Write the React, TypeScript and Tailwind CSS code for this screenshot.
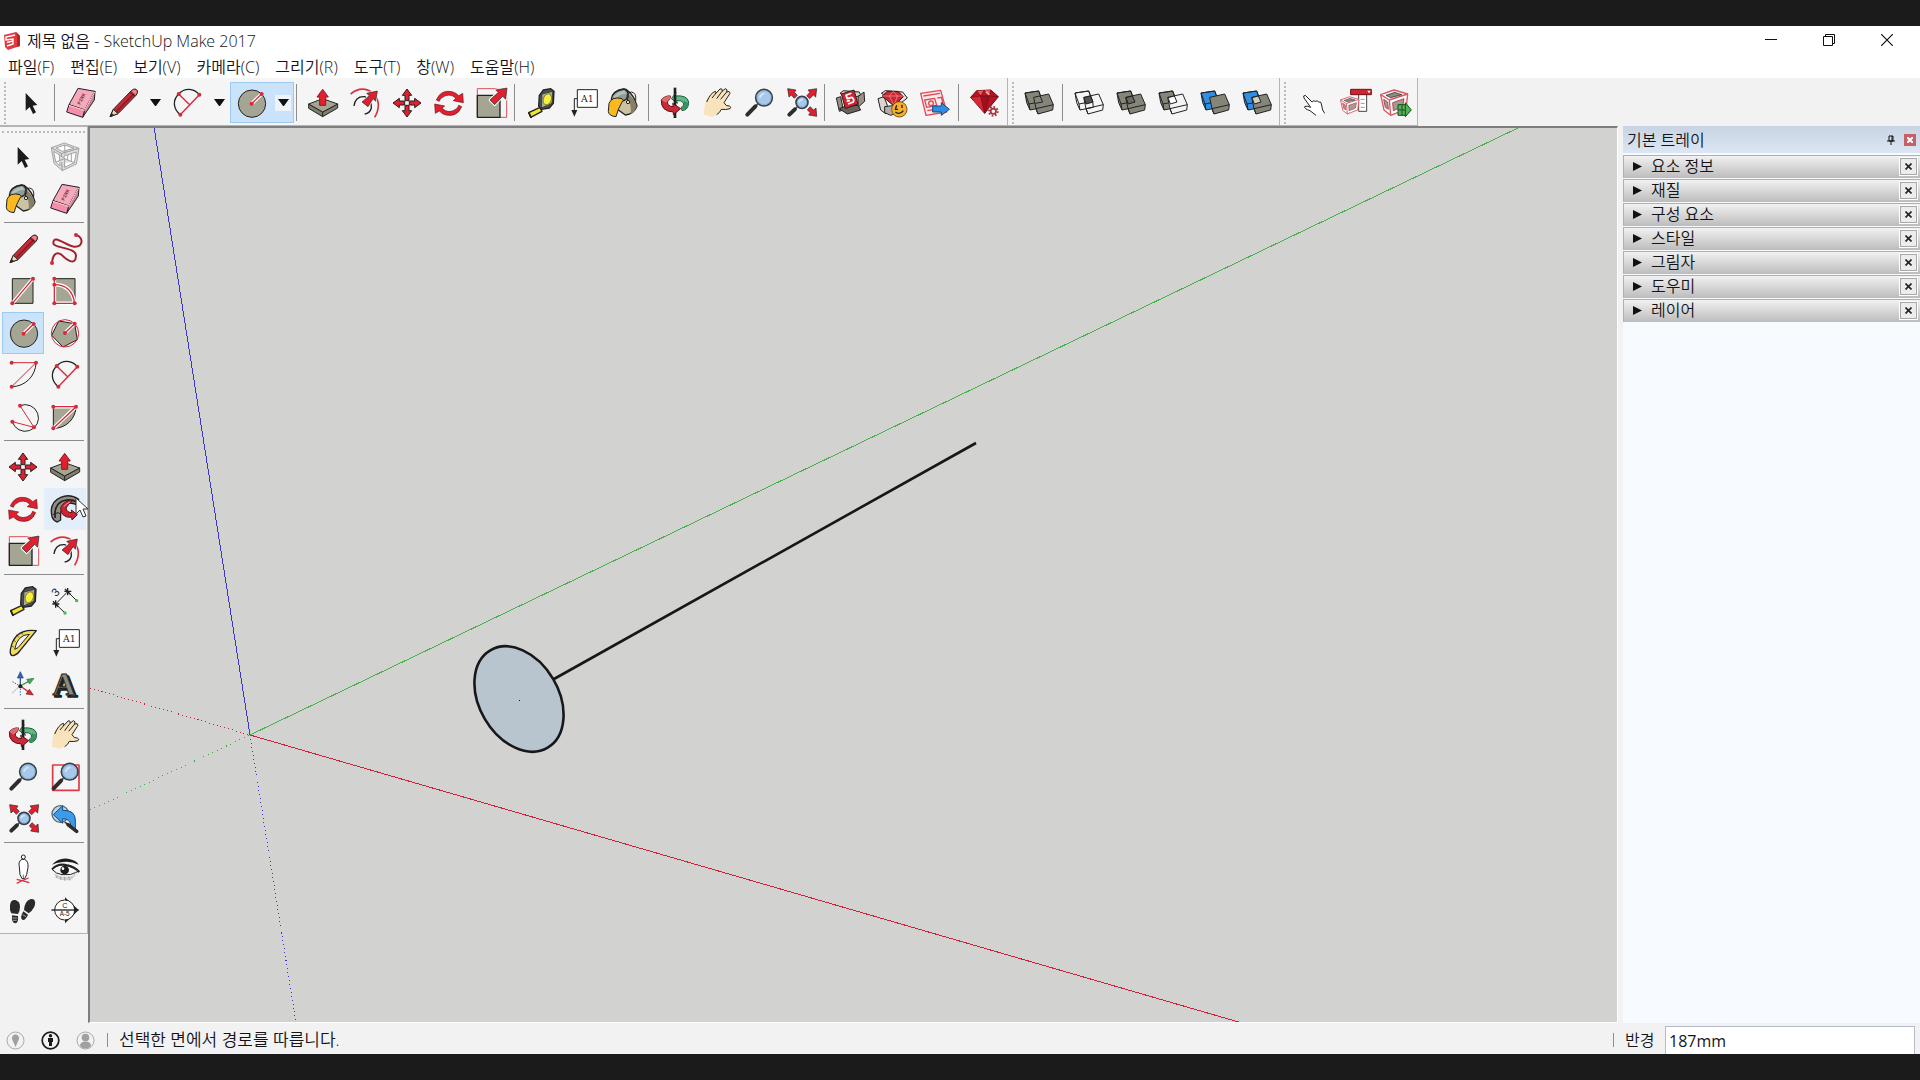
import type { ReactNode } from 'react'

const RED = '#e01f2f'
const INK = '#222222'
const STONE = '#a5a594'

function Icon({ children, low }: { children: ReactNode; low?: boolean }) {
  return (
    <svg
      className="h-[42px] w-[42px] shrink-0"
      viewBox={low ? '0 -6 126 126' : '0 0 126 126'}
      fill="none"
      strokeLinejoin="round"
      aria-hidden="true"
    >
      {children}
    </svg>
  )
}

function Dots({ points }: { points: number[][] }) {
  return (
    <>
      {points.map(([x, y]) => (
        <circle key={`${x}-${y}`} cx={x} cy={y} r="6" fill="#d42a3a" />
      ))}
    </>
  )
}

// red guide line with a white edge, used on filled shapes
function Guide({ d }: { d: string }) {
  return (
    <>
      <path d={d} stroke="#fff" strokeWidth="11" />
      <path d={d} stroke="#d42a3a" strokeWidth="4" />
    </>
  )
}

function Lens({ cx, cy, r, hx, hy }: { cx: number; cy: number; r: number; hx: number; hy: number }) {
  const dx = hx - cx
  const dy = hy - cy
  const len = Math.hypot(dx, dy)
  const sx = cx + (dx / len) * (r + 2)
  const sy = cy + (dy / len) * (r + 2)
  const mx = cx + (dx / len) * (r + 12)
  const my = cy + (dy / len) * (r + 12)
  return (
    <>
      <path d={`M${sx} ${sy}L${mx} ${my}`} stroke="#444" strokeWidth="5" />
      <path d={`M${mx} ${my}L${hx} ${hy}`} stroke="#2d2d2d" strokeWidth="12" strokeLinecap="round" />
      <circle cx={cx} cy={cy} r={r} fill="#a6c8ea" stroke="#3a4048" strokeWidth="5" />
      <circle cx={cx} cy={cy} r={r - 4} stroke="#7fa3c8" strokeWidth="2" />
      <path d={`M${cx - r / 2} ${cy}Q${cx - r / 3} ${cy - r / 2} ${cx + 2} ${cy - r / 2}`} stroke="#d6e8f8" strokeWidth="5" />
    </>
  )
}

function SelectIcon() {
  return (
    <Icon>
      <path d="M47 33V86L59 75L69 96L78 91L68 71L82 69Z" fill="#1b1b1b" />
    </Icon>
  )
}

function ComponentIcon() {
  return (
    <Icon>
      <g stroke="#a3a3a3" strokeWidth="3" fill="#dedede">
        <path d="M22 35L61 21L105 37L52 53Z" />
        <path d="M22 35L52 53L55 104L30 82Z" />
        <path d="M52 53L105 37L97 84L55 104Z" />
        <path d="M36 36L62 27L90 37L55 46Z" fill="#fff" />
        <path d="M29 46L46 57L48 90L35 78Z" fill="#fff" />
        <path d="M60 60L97 48L91 80L62 94Z" fill="#fff" />
        <path d="M62 27L63 55M35 78L62 68L91 80M46 57L62 68V94M72 56L70 72M82 52V76" />
      </g>
    </Icon>
  )
}

function PaintIcon() {
  return (
    <Icon>
      <path d="M28 40Q40 18 66 22Q90 38 99 72Q90 96 64 99L38 80Z" fill="#cbc3a2" stroke={INK} strokeWidth="4" />
      <path d="M76 38Q92 52 98 72Q92 92 80 96Q84 66 68 48Z" fill="#877f68" />
      <path d="M22 52Q24 26 60 21Q76 26 72 46Q56 66 22 52Z" fill="#8d9d98" stroke={INK} strokeWidth="4" />
      <path d="M28 44Q40 28 62 26L66 36Q48 34 34 50Z" fill="#b5c1bc" />
      <path d="M15 64Q24 42 54 50Q62 54 54 60Q42 80 36 104Q14 102 13 88Z" fill="#fbb91f" stroke={INK} strokeWidth="3" />
      <circle cx="72" cy="60" r="5" fill="#eee" stroke={INK} strokeWidth="3" />
      <path d="M72 58Q62 34 82 30Q98 32 95 56" stroke={INK} strokeWidth="3" />
    </Icon>
  )
}

function EraserIcon() {
  return (
    <Icon>
      <g stroke={INK} strokeWidth="3">
        <path d="M54 19L105 28L74 84L27 68Z" fill="#f7a8bb" />
        <path d="M105 28L103 54L68 106L74 84Z" fill="#d97f97" />
        <path d="M27 68L74 84L68 106L20 90Z" fill="#f98bab" />
      </g>
      <path d="M27 70L74 85L104 30" stroke="#fdd" strokeWidth="3" />
      <text x="60" y="69" transform="rotate(-62 60 69)" fontFamily="Liberation Mono, monospace" fontWeight="700" fontSize="15" fill="#8a3a4c">PINK</text>
    </Icon>
  )
}

function PencilIcon() {
  return (
    <Icon>
      <path d="M24 104L34 82L88 26Q100 16 106 26Q108 34 102 40L48 95Z" fill="#cf2733" stroke={INK} strokeWidth="3" />
      <path d="M34 82L48 95L24 104Z" fill="#ead7ac" stroke={INK} strokeWidth="3" />
      <path d="M24 104L29 92L35 99Z" fill={INK} />
      <path d="M44 88L94 37" stroke="#8e1a24" strokeWidth="5" />
      <path d="M84 29L99 43" stroke={INK} strokeWidth="3" />
      <path d="M88 28Q98 19 104 27Q106 32 101 38Z" fill="#d98f98" />
    </Icon>
  )
}

function FreehandIcon() {
  return (
    <Icon>
      <path d="M96 21C120 28 118 58 90 56C66 54 28 16 28 46C30 62 96 56 96 84C94 116 66 94 52 80C36 68 26 82 24 105" stroke="#a3212d" strokeWidth="6" />
      <Dots points={[[96, 21], [24, 105]]} />
    </Icon>
  )
}

function RectangleIcon() {
  return (
    <Icon>
      <rect x="31" y="26" width="62" height="74" fill={STONE} stroke={INK} strokeWidth="3" />
      <Guide d="M31 100L93 26" />
      <Dots points={[[31, 100], [93, 26]]} />
    </Icon>
  )
}

function RotatedRectIcon() {
  return (
    <Icon>
      <rect x="31" y="26" width="62" height="74" fill={STONE} stroke={INK} strokeWidth="3" />
      <Guide d="M31 26V100H92" />
      <Guide d="M31 44Q84 44 92 100" />
      <Dots points={[[31, 26], [31, 44], [31, 100], [92, 100]]} />
    </Icon>
  )
}

function CircleIcon() {
  return (
    <Icon>
      <circle cx="66" cy="65" r="41" fill={STONE} stroke={INK} strokeWidth="3" />
      <Guide d="M65 65L95 36" />
      <Dots points={[[65, 65], [95, 36]]} />
    </Icon>
  )
}

function PolygonIcon() {
  return (
    <Icon>
      <path d="M92 35L100 83L57 105L23 70L44 27Z" fill={STONE} stroke={INK} strokeWidth="3" />
      <circle cx="63" cy="64" r="41" stroke="#d42a3a" strokeWidth="3" />
      <Guide d="M63 63L92 35" />
      <Dots points={[[63, 63], [92, 35]]} />
    </Icon>
  )
}

function ArcIcon() {
  return (
    <Icon>
      <path d="M29 98A73 73 0 0 0 102 26" stroke={INK} strokeWidth="3" />
      <path d="M29 26H102L29 98" stroke="#d42a3a" strokeWidth="3" />
      <Dots points={[[29, 26], [102, 26], [29, 98]]} />
    </Icon>
  )
}

function TwoPointArcIcon() {
  return (
    <Icon>
      <path d="M43 98C20 80 20 54 38 36C56 16 84 18 100 38" stroke={INK} strokeWidth="4" />
      <path d="M100 38L43 98M38 36L71 68" stroke="#d42a3a" strokeWidth="4" />
      <Dots points={[[38, 36], [100, 38], [43, 98]]} />
    </Icon>
  )
}

function ThreePointArcIcon() {
  return (
    <Icon>
      <path d="M54 29A40 40 0 1 1 31 77" stroke={INK} strokeWidth="3" />
      <path d="M54 29L96 94L31 77" stroke="#d42a3a" strokeWidth="3" />
      <Dots points={[[54, 29], [31, 77], [96, 94]]} />
    </Icon>
  )
}

function PieIcon() {
  return (
    <Icon>
      <path d="M28 32H96A66 66 0 0 1 28 97Z" fill={STONE} stroke={INK} strokeWidth="3" />
      <Guide d="M28 97L96 32H28" />
      <Dots points={[[28, 32], [96, 32], [28, 97]]} />
    </Icon>
  )
}

function MoveIcon() {
  return (
    <Icon>
      {[0, 90, 180, 270].map((angle) => (
        <path key={angle} d="M63 21L77 40H69V56H57V40H49Z" transform={`rotate(${angle} 63 63)`} fill={RED} stroke={INK} strokeWidth="3" />
      ))}
    </Icon>
  )
}

function PushPullIcon() {
  return (
    <Icon>
      <path d="M20 66V79L62 104L107 78V66L62 90Z" fill="#7f7f70" stroke={INK} strokeWidth="3" />
      <path d="M20 66L62 50L107 66L62 90Z" fill={STONE} stroke={INK} strokeWidth="3" />
      <path d="M62 90V104" stroke={INK} strokeWidth="3" />
      <path d="M62 22L79 45H71V70H53V45H45Z" fill={RED} stroke="#8e1a24" strokeWidth="3" />
    </Icon>
  )
}

function RotateIcon() {
  return (
    <Icon>
      {[0, 180].map((angle) => (
        <g key={angle} transform={`rotate(${angle} 63 64)`}>
          <path d="M25 54Q38 22 72 29Q84 32 92 41L104 34L106 62L76 56L84 49Q64 30 40 48Q36 52 34 58Z" fill={RED} stroke="#6b1018" strokeWidth="2" />
        </g>
      ))}
    </Icon>
  )
}

function FollowMeIcon() {
  return (
    <Icon>
      <path d="M24 86Q14 44 50 28Q78 16 104 34L98 50Q72 38 58 54Q48 66 50 96L40 102Q28 98 24 86Z" fill="#8f8f86" stroke={INK} strokeWidth="4" />
      <path d="M34 90Q28 54 54 40Q76 30 98 42" stroke={INK} strokeWidth="5" />
      <path d="M26 80L42 74L50 78" stroke={INK} strokeWidth="3" />
      <path d="M50 58Q62 36 88 36Q74 46 66 60Q68 74 84 74L82 66L100 80L84 96L83 88Q50 90 50 58Z" fill="#cf2430" stroke="#5b1218" strokeWidth="3" />
      <path d="M60 56Q66 46 78 42" stroke="#f0a0a6" strokeWidth="3" />
    </Icon>
  )
}

function ScaleIcon() {
  return (
    <Icon>
      <rect x="22" y="20" width="88" height="86" stroke="#d8505c" strokeWidth="3" />
      <rect x="22" y="40" width="68" height="66" fill={STONE} stroke={INK} strokeWidth="4" />
      <path d="M111 18L107 52L98 43L74 68L60 54L85 31L77 24Z" fill={RED} stroke="#fff" strokeWidth="8" />
      <path d="M111 18L107 52L98 43L74 68L60 54L85 31L77 24Z" fill={RED} stroke={INK} strokeWidth="2" />
    </Icon>
  )
}

function OffsetIcon() {
  return (
    <Icon>
      <path d="M20 36Q54 8 88 34Q116 64 92 106" stroke="#d8303e" strokeWidth="5" />
      <path d="M30 72Q34 42 62 44Q84 54 82 78Q78 94 62 96" stroke={INK} strokeWidth="4" />
      <path d="M100 27L95 58L87 50L72 74L54 60L76 41L68 34Z" fill={RED} stroke="#fff" strokeWidth="6" />
      <path d="M100 27L95 58L87 50L72 74L54 60L76 41L68 34Z" fill={RED} stroke={INK} strokeWidth="2" />
    </Icon>
  )
}

function TapeIcon() {
  return (
    <Icon>
      <path d="M60 76L26 92L32 106L66 88Z" fill="#f4e32c" stroke={INK} strokeWidth="4" />
      <path d="M26 90L34 108" stroke={INK} strokeWidth="5" />
      <path d="M58 40L70 24L92 20L102 28L100 64L88 78L64 82L56 72Z" fill="#4e524e" stroke={INK} strokeWidth="4" />
      <path d="M66 36L98 28L96 64L64 78Z" fill="#a9ada2" stroke={INK} strokeWidth="2" />
      <ellipse cx="82" cy="52" rx="12" ry="17" transform="rotate(20 82 52)" fill="#f8ee3c" stroke="#8a862a" strokeWidth="3" />
    </Icon>
  )
}

function DimensionIcon() {
  return (
    <Icon>
      <path d="M71 35L35 72M71 35L98 62M35 72L63 99" stroke={INK} strokeWidth="3" />
      <path d="M71 24V46M61 34H82M63 27L79 43M35 61V83M25 72H46M27 64L43 80" stroke={INK} strokeWidth="4" />
      <circle cx="98" cy="62" r="5" fill="#4fb45a" />
      <circle cx="63" cy="99" r="5" fill="#4fb45a" />
      <text x="36" y="52" transform="rotate(-45 36 52)" fontFamily="Liberation Sans, sans-serif" fontSize="34" fill={INK}>3</text>
    </Icon>
  )
}

function ProtractorIcon() {
  return (
    <Icon>
      <path d="M103 26Q36 18 25 84Q23 102 34 101Q46 98 54 86Z" fill="#f2dc5a" stroke={INK} strokeWidth="4" />
      <path d="M82 37Q46 38 38 82L48 77Z" fill="#f5f5f5" stroke={INK} strokeWidth="3" />
      <path d="M58 30L62 38M44 38L50 46M33 54L41 59M28 72L36 75" stroke={INK} strokeWidth="2" />
    </Icon>
  )
}

function TextIcon() {
  return (
    <Icon>
      <rect x="46" y="23" width="60" height="53" fill="#fff" stroke={INK} strokeWidth="3" />
      <path d="M46 50H37V88" stroke={INK} strokeWidth="3" />
      <path d="M28 84H46L37 104Z" fill={INK} />
      <text x="76" y="59" textAnchor="middle" fontFamily="DejaVu Serif, serif" fontWeight="400" fontSize="28" fill={INK}>A1</text>
    </Icon>
  )
}

function AxesIcon() {
  return (
    <Icon>
      <path d="M55 66V36" stroke="#2f5fa8" strokeWidth="4" />
      <path d="M55 23L64 42H46Z" fill="#2f66b4" stroke="#1f4478" strokeWidth="2" />
      <path d="M55 66L80 52" stroke="#3d9a50" strokeWidth="4" />
      <path d="M96 43L83 60L74 46Z" fill="#4aa35a" stroke="#2c7a3c" strokeWidth="2" />
      <path d="M55 66L80 84" stroke="#c02834" strokeWidth="4" />
      <path d="M94 93L72 90L82 76Z" fill="#cf2a36" stroke="#8e1a24" strokeWidth="2" />
      <path d="M55 74V98" stroke="#2f5fa8" strokeWidth="3" strokeDasharray="4 4" />
      <path d="M49 70L30 88" stroke="#3d9a50" strokeWidth="3" strokeDasharray="4 4" />
      <path d="M49 63L28 51" stroke="#c02834" strokeWidth="3" strokeDasharray="4 4" />
      <circle cx="55" cy="67" r="6" fill={INK} />
    </Icon>
  )
}

function SolidTextIcon() {
  return (
    <Icon>
      <g fontFamily="Liberation Serif, serif" fontWeight="700" fontSize="96" textAnchor="middle">
        <text x="66" y="98" fill="#4c4c44" stroke={INK} strokeWidth="5">A</text>
        <text x="60" y="94" fill="#8b8b7e" stroke={INK} strokeWidth="3">A</text>
      </g>
    </Icon>
  )
}

function OrbitIcon() {
  return (
    <Icon>
      <path d="M62 42Q100 38 104 60Q104 84 84 86L82 76Q92 70 88 62Q82 54 68 56L70 64L52 50L66 32Z" fill="#5fb886" stroke="#1f5a3a" strokeWidth="3" />
      <path d="M90 56Q98 62 104 62Q104 80 84 86L82 76Q92 70 90 56Z" fill="#39925f" />
      <path d="M63 17V108" stroke={INK} strokeWidth="8" />
      <path d="M22 54Q32 40 50 42L46 54Q36 58 42 68Q48 74 58 74L56 64L80 80L58 98L58 90Q20 88 22 54Z" fill="#c92a3a" stroke="#5b1218" strokeWidth="3" />
      <path d="M22 54Q32 40 50 42L46 54Q38 56 36 62Z" fill="#de6a70" />
    </Icon>
  )
}

function HandIcon() {
  return (
    <Icon>
      <path d="M24 98Q24 70 32 52Q46 30 58 28Q62 28 60 34L72 21Q80 18 80 26L88 20Q96 20 94 28L100 28Q104 32 98 40L84 62Q90 72 98 72Q106 74 104 80Q90 84 76 82Q68 96 50 104Z" fill="#f8e3bd" />
      <path d="M32 60Q44 32 58 28Q62 28 58 36L48 48M58 36L72 21Q80 18 78 28L62 50M78 28L88 20Q96 22 92 30L74 52M92 30Q102 26 102 34L84 62Q90 74 100 72Q108 76 102 80Q90 84 76 82Q72 92 62 98" stroke={INK} strokeWidth="3" />
    </Icon>
  )
}

function ZoomIcon() {
  return (
    <Icon>
      <Lens cx={78} cy={47} r={25} hx={28} hy={98} />
    </Icon>
  )
}

function ZoomWindowIcon() {
  return (
    <Icon>
      <rect x="26" y="27" width="79" height="76" stroke="#dc3a46" strokeWidth="5" />
      <Lens cx={77} cy={47} r={25} hx={29} hy={97} />
    </Icon>
  )
}

function ZoomExtentsIcon() {
  return (
    <Icon>
      <Lens cx={66} cy={61} r={18} hx={28} hy={98} />
      <g fill={RED} stroke={INK} strokeWidth="2">
        <path d="M23 20L48 24L43 31L52 40L43 49L34 39L27 45Z" />
        <path d="M110 20L107 45L100 39L89 50L80 41L90 31L84 24Z" />
        <path d="M110 103L86 99L91 92L82 84L90 74L101 84L108 78Z" />
      </g>
    </Icon>
  )
}

function PreviousIcon() {
  return (
    <Icon>
      <circle cx="49" cy="48" r="25" fill="#b9d3ea" stroke="#59626c" strokeWidth="4" />
      <path d="M28 50L56 23V37Q94 36 94 66V94L80 84Q80 62 56 62V76Z" fill="#3b9be8" stroke="#1c4a7c" strokeWidth="3" />
      <path d="M62 72L76 82" stroke="#444" strokeWidth="5" />
      <path d="M72 80L98 100" stroke="#2d2d2d" strokeWidth="11" strokeLinecap="round" />
    </Icon>
  )
}

function PositionCameraIcon() {
  return (
    <Icon>
      <path d="M44 94Q62 98 82 104M44 106Q64 96 80 90" stroke="#d8303e" strokeWidth="4" />
      <path d="M60 34Q48 40 52 56L54 80L60 92H68L74 80L78 58Q80 40 68 34Z" fill="#fff" stroke={INK} strokeWidth="3" />
      <circle cx="64" cy="27" r="6" fill="#fff" stroke={INK} strokeWidth="3" />
      <path d="M64 80V92" stroke={INK} strokeWidth="2" />
    </Icon>
  )
}

function LookAroundIcon() {
  return (
    <Icon>
      <path d="M30 74Q60 98 98 78L84 94Q60 102 36 90Z" fill="#d0d0d0" />
      <path d="M24 50Q44 28 72 32Q98 36 104 50Q80 38 56 42Q36 44 24 50Z" fill="#1c1c1c" />
      <path d="M24 64Q44 46 68 53Q90 58 104 70Q80 84 54 80Q36 78 24 64Z" fill="#f5f5f5" stroke={INK} strokeWidth="3" />
      <path d="M24 64Q44 44 70 52Q92 57 106 72" stroke={INK} strokeWidth="6" />
      <circle cx="62" cy="66" r="13" fill="#1c1c1c" />
      <circle cx="57" cy="62" r="4" fill="#fff" />
      <path d="M40 82L36 90M50 86V96M62 86V98M74 86L78 98M90 80L100 66" stroke="#8a8a8a" strokeWidth="2" />
    </Icon>
  )
}

function WalkIcon() {
  return (
    <Icon>
      <path d="M24 46Q26 28 40 30Q54 34 54 50Q54 62 48 72L28 70Q22 60 24 46Z" fill="#2a2a2a" />
      <path d="M30 76L48 78Q50 100 40 100Q28 100 30 76Z" fill="#2a2a2a" />
      <path d="M72 38Q82 24 94 28Q104 34 96 52Q90 64 80 70L66 60Q66 48 72 38Z" fill="#2a2a2a" />
      <path d="M64 64L78 74Q70 92 62 90Q52 84 64 64Z" fill="#2a2a2a" />
      <path d="M31 84H46M33 91H44M62 74L72 80" stroke="#ddd" strokeWidth="2" />
    </Icon>
  )
}

function SectionIcon() {
  return (
    <Icon>
      <path d="M63 22L104 60L63 100Z" fill={INK} />
      <circle cx="62" cy="60" r="30" fill="#fff" stroke={INK} strokeWidth="3" />
      <path d="M22 60H104" stroke={INK} strokeWidth="4" />
      <g fontFamily="Liberation Sans, sans-serif" fontSize="22" fill={INK} textAnchor="middle">
        <text x="63" y="54">C</text>
        <text x="62" y="79" fontSize="19">A-5</text>
      </g>
    </Icon>
  )
}

function GetModelsIcon() {
  return (
    <Icon low>
      <g stroke={INK} strokeWidth="3">
        <path d="M19 42L32 38L40 78L28 82Z" fill="#9b8f82" />
        <path d="M30 28L40 20L88 24L92 34L60 44Z" fill="#d8d2cc" />
        <path d="M84 38L102 24L104 52L84 70Z" fill="#9b8f82" />
        <path d="M28 74L48 66L84 64L92 78L52 90Z" fill="#6d6259" />
        <path d="M34 30L72 18L84 60L46 74Z" fill="#d3212e" />
      </g>
      <path d="M64 28L48 34L52 44L66 40Q74 46 70 54L54 60M50 52L60 49" stroke="#fff" strokeWidth="5" />
    </Icon>
  )
}

function ExtensionBoxIcon() {
  return (
    <Icon low>
      <g stroke={INK} strokeWidth="3">
        <path d="M18 44L36 38L46 64L42 90L26 78Z" fill="#d8d4d0" />
        <path d="M28 28L40 20L92 24L106 42L88 56Z" fill="#e8e4e0" />
        <path d="M38 68L84 62V84L56 94L38 86Z" fill="#b5aca4" />
        <path d="M30 36L46 22H78L94 38L66 66Z" fill="#cc2631" />
      </g>
      <path d="M30 36H94M52 36L66 64L76 36L64 22L52 36" stroke="#f2a2a6" strokeWidth="2" />
      <circle cx="82" cy="76" r="23" fill="#f6b02a" stroke="#7d5310" strokeWidth="3" />
      <path d="M74 64L70 76H78M90 62V72M70 84Q84 94 94 80" stroke={INK} strokeWidth="4" />
    </Icon>
  )
}

function LayoutIcon() {
  return (
    <Icon low>
      <g stroke="#dd4a54" strokeWidth="4">
        <path d="M20 28L80 19L98 84L36 94Z" fill="#fbe9ea" />
        <path d="M28 36L78 28M32 48L62 43L68 64L38 70ZM70 42L82 40L88 62M40 80L64 76" />
        <circle cx="51" cy="58" r="7" />
      </g>
      <path d="M56 66H82V56L106 76L82 94V84H56Z" fill="#2f8fe6" stroke="#1b4676" strokeWidth="3" />
    </Icon>
  )
}

function RubyIcon() {
  return (
    <Icon low>
      <path d="M20 40L38 20L80 18L103 38L62 88Z" fill="#b81522" stroke="#5b0a12" strokeWidth="3" />
      <path d="M38 20L50 36L60 19L76 36L80 18Z" fill="#ef5a5f" />
      <path d="M20 40L50 36L62 88Z" fill="#d92634" />
      <path d="M50 36H76L62 88Z" fill="#a0101c" />
      <path d="M20 40L50 36L76 36L103 38M50 36L38 20M50 36L60 19L76 36L80 18M76 36L62 88L50 36" stroke="#6e0f18" strokeWidth="2" />
      <path d="M66 24L76 32" stroke="#ffc8ca" strokeWidth="4" />
      <circle cx="88" cy="82" r="16" fill="#f5f5f5" />
      <circle cx="88" cy="82" r="13" stroke="#a8303a" strokeWidth="6" strokeDasharray="5 5" />
      <circle cx="88" cy="82" r="8" stroke="#a8303a" strokeWidth="5" />
    </Icon>
  )
}

interface SolidsProps {
  back: string
  front: string
  overlap?: string
}

// two intersecting slabs, shared by every solid tool
function SolidsIcon({ back, front, overlap }: SolidsProps) {
  return (
    <Icon low>
      <g stroke={INK} strokeWidth="3">
        <path d="M21 27L26 56L36 78L76 70L74 52L62 21Z" fill={back} />
        <path d="M21 27L62 21L74 52L33 60Z" />
        <path d="M33 60L36 78" />
        <path d="M47 40L92 30L106 62L104 78L60 90L54 74Z" fill={front} />
        <path d="M54 74L106 62M54 74L60 90" />
        {back === front && <path d="M66 36L74 54L52 58" />}
        {overlap && <path d="M48 41L67 36L75 54L55 60Z" fill={overlap} />}
      </g>
    </Icon>
  )
}

function InteractIcon() {
  return (
    <Icon low>
      <path d="M78 94L60 80Q42 74 44 68Q50 64 62 70L42 42Q38 34 46 34L66 54Q70 48 76 52Q82 48 86 54Q94 52 94 60L98 78L104 88" fill="#fff" stroke={INK} strokeWidth="3" />
    </Icon>
  )
}

function WireBox({ small }: { small?: boolean }) {
  return (
    <g transform={small ? 'translate(12 26) scale(0.68)' : undefined}>
      <g stroke="#dd5560" strokeWidth="4" fill="#fff">
        <path d="M20 32L60 18L101 30L96 76L50 94L30 78Z" />
        <path d="M20 32L46 48L101 30M46 48L50 94" />
      </g>
      <path d="M36 34L62 25L84 32L50 41Z" fill="#8b8b80" stroke={INK} strokeWidth="2" />
      <path d="M29 46L41 54L43 76L34 70ZM56 56L90 44L86 68L58 80Z" fill="#a09c94" stroke="#b04850" strokeWidth="3" />
    </g>
  )
}

function OptionsIcon() {
  return (
    <Icon low>
      <rect x="80" y="30" width="24" height="52" fill="#fff" stroke="#444" strokeWidth="3" />
      <path d="M86 46H98M86 58H98M86 70H98" stroke="#999" strokeWidth="3" />
      <rect x="56" y="16" width="62" height="16" fill="#cf2430" stroke="#6e0f18" strokeWidth="3" />
      <path d="M106 20H116L111 28Z" fill="#fff" />
      <WireBox small />
    </Icon>
  )
}

function AttributesIcon() {
  return (
    <Icon low>
      <WireBox />
      <path d="M72 62H94V56L112 78L94 98V94H72Z" fill="#52b452" stroke="#1c4f22" strokeWidth="3" />
      <path d="M72 78H94M84 62V94M94 60V96" stroke="#1c4f22" strokeWidth="3" />
    </Icon>
  )
}

interface Tool {
  label: string
  icon: ReactNode
  menu?: boolean
  active?: boolean
}

const mainTools: Tool[][] = [
  [{ label: '선택', icon: <SelectIcon /> }],
  [
    { label: '지우개', icon: <EraserIcon /> },
    { label: '선', icon: <PencilIcon />, menu: true },
    { label: '호', icon: <TwoPointArcIcon />, menu: true },
    { label: '원', icon: <CircleIcon />, menu: true, active: true },
  ],
  [
    { label: '밀기/끌기', icon: <PushPullIcon /> },
    { label: '오프셋', icon: <OffsetIcon /> },
    { label: '이동', icon: <MoveIcon /> },
    { label: '회전', icon: <RotateIcon /> },
    { label: '배율', icon: <ScaleIcon /> },
  ],
  [
    { label: '줄자', icon: <TapeIcon /> },
    { label: '텍스트', icon: <TextIcon /> },
    { label: '페인트통', icon: <PaintIcon /> },
  ],
  [
    { label: '궤도', icon: <OrbitIcon /> },
    { label: '화면이동', icon: <HandIcon /> },
    { label: '확대/축소', icon: <ZoomIcon /> },
    { label: '범위 확대', icon: <ZoomExtentsIcon /> },
  ],
  [
    { label: '모델 가져오기', icon: <GetModelsIcon /> },
    { label: '확장 프로그램', icon: <ExtensionBoxIcon /> },
    { label: 'LayOut으로 보내기', icon: <LayoutIcon /> },
  ],
  [{ label: '확장 관리자', icon: <RubyIcon /> }],
]

const solidTools: Tool[][] = [
  [{ label: '외부 쉘', icon: <SolidsIcon back="#85857a" front="#85857a" /> }],
  [
    { label: '교차', icon: <SolidsIcon back="none" front="none" overlap="#55554f" /> },
    { label: '결합', icon: <SolidsIcon back="#85857a" front="#85857a" overlap="#6a6a61" /> },
    { label: '빼기', icon: <SolidsIcon back="#85857a" front="#f4f4f4" overlap="#fff" /> },
    { label: '자르기', icon: <SolidsIcon back="#2f8fe6" front="#85857a" /> },
    { label: '분할', icon: <SolidsIcon back="#2f8fe6" front="#85857a" overlap="#cfcfca" /> },
  ],
]

const componentTools: Tool[][] = [
  [
    { label: '상호작용', icon: <InteractIcon /> },
    { label: '구성 요소 옵션', icon: <OptionsIcon /> },
    { label: '구성 요소 특성', icon: <AttributesIcon /> },
  ],
]

const paletteTools: Tool[][] = [
  [
    { label: '선택', icon: <SelectIcon /> },
    { label: '구성 요소 만들기', icon: <ComponentIcon /> },
    { label: '페인트통', icon: <PaintIcon /> },
    { label: '지우개', icon: <EraserIcon /> },
  ],
  [
    { label: '선', icon: <PencilIcon /> },
    { label: '자유곡선', icon: <FreehandIcon /> },
    { label: '직사각형', icon: <RectangleIcon /> },
    { label: '회전된 직사각형', icon: <RotatedRectIcon /> },
    { label: '원', icon: <CircleIcon />, active: true },
    { label: '다각형', icon: <PolygonIcon /> },
    { label: '호', icon: <ArcIcon /> },
    { label: '2점 호', icon: <TwoPointArcIcon /> },
    { label: '3점 호', icon: <ThreePointArcIcon /> },
    { label: '파이', icon: <PieIcon /> },
  ],
  [
    { label: '이동', icon: <MoveIcon /> },
    { label: '밀기/끌기', icon: <PushPullIcon /> },
    { label: '회전', icon: <RotateIcon /> },
    { label: '따라가기', icon: <FollowMeIcon /> },
    { label: '배율', icon: <ScaleIcon /> },
    { label: '오프셋', icon: <OffsetIcon /> },
  ],
  [
    { label: '줄자', icon: <TapeIcon /> },
    { label: '치수', icon: <DimensionIcon /> },
    { label: '각도기', icon: <ProtractorIcon /> },
    { label: '텍스트', icon: <TextIcon /> },
    { label: '축', icon: <AxesIcon /> },
    { label: '3D 텍스트', icon: <SolidTextIcon /> },
  ],
  [
    { label: '궤도', icon: <OrbitIcon /> },
    { label: '화면이동', icon: <HandIcon /> },
    { label: '확대/축소', icon: <ZoomIcon /> },
    { label: '창 확대', icon: <ZoomWindowIcon /> },
    { label: '범위 확대', icon: <ZoomExtentsIcon /> },
    { label: '이전', icon: <PreviousIcon /> },
  ],
  [
    { label: '카메라 배치', icon: <PositionCameraIcon /> },
    { label: '둘러보기', icon: <LookAroundIcon /> },
    { label: '걷기', icon: <WalkIcon /> },
    { label: '단면', icon: <SectionIcon /> },
  ],
]

const menus = ['파일(F)', '편집(E)', '보기(V)', '카메라(C)', '그리기(R)', '도구(T)', '창(W)', '도움말(H)']
const trays = ['요소 정보', '재질', '구성 요소', '스타일', '그림자', '도우미', '레이어']

function Toolbar({ groups, label }: { groups: Tool[][]; label: string }) {
  return (
    <div role="toolbar" aria-label={label} className="flex border-r border-b border-[#b4b4b4] bg-[#f5f5f5] pr-px">
      <div className="ml-1 mr-1 mt-1 mb-px w-[2px] border-l-2 border-dotted border-[#bcbcbc]" />
      {groups.map((group, index) => (
        <div key={index} className="flex">
          {index > 0 && <div className="mt-[6px] mr-[5px] mb-1 ml-[2px] w-px bg-[#8c8c8c]" />}
          {group.map((tool) => (
            <div
              key={tool.label}
              className={`mt-1 flex h-[41px] ${tool.active ? 'bg-[#cbe3fa] outline-1 -outline-offset-1 outline-[#9ccaf2]' : ''}`}
            >
              <button aria-label={tool.label} className="h-[41px] w-[42px]">
                {tool.icon}
              </button>
              {tool.menu && (
                <button aria-label={`${tool.label} 메뉴`} className="flex w-[22px] items-center justify-center">
                  <span className={`flex h-4 w-4 items-center justify-center ${tool.active ? 'bg-[#eef4fb]' : ''}`}>
                    <svg className="h-[7px] w-[11px]" viewBox="0 0 11 7" aria-hidden="true">
                      <path d="M0 0H11L6 7H5Z" fill="#111" />
                    </svg>
                  </span>
                </button>
              )}
            </div>
          ))}
        </div>
      ))}
    </div>
  )
}

function Palette() {
  return (
    <div role="toolbar" aria-label="큰 도구 세트" aria-orientation="vertical" className="border-r border-b border-t border-[#b4b4b4] bg-[#f5f5f5] pl-[2px]">
      <div className="mt-1 mr-[2px] mb-[3px] h-[2px] border-t-2 border-dotted border-[#bcbcbc]" />
      {paletteTools.map((group, index) => (
        <div key={index}>
          {index > 0 && <div className="mt-[2px] mr-[3px] mb-[5px] ml-[2px] h-px bg-[#8c8c8c]" />}
          <div className="grid grid-cols-[42px_42px]">
            {group.map((tool) => {
              const hovered = tool.label === '따라가기'
              return (
                <button
                  key={tool.label}
                  aria-label={tool.label}
                  className={`relative h-[42px] w-[42px] ${tool.active ? 'bg-[#cbe3fa] outline-1 -outline-offset-1 outline-[#9ccaf2]' : ''} ${hovered ? 'bg-[#e3eefa]' : ''}`}
                >
                  {tool.icon}
                  {hovered && (
                    <svg className="absolute top-[9px] left-[31px] z-10 h-[21px] w-[14px]" viewBox="0 0 14 21" aria-hidden="true">
                      <path d="M1 1V17L5 13L8 20L11 19L8 12H13Z" fill="#fff" stroke="#333" />
                    </svg>
                  )}
                </button>
              )
            })}
          </div>
        </div>
      ))}
      <div className="h-px" />
    </div>
  )
}

function Viewport() {
  return (
    <main className="min-w-0 flex-1 border-t-2 border-l-2 border-r border-b border-t-[#7e7e7e] border-r-white border-b-white border-l-[#7e7e7e] bg-[#d2d2d0]">
      <svg className="block h-full w-full" aria-label="모델 뷰" role="img">
        <g shapeRendering="crispEdges" strokeWidth="1">
          <path d="M160 607L64 -1" stroke="#3c36c4" />
          <path d="M160 607L206 895" stroke="#3c36c4" strokeDasharray="1 3" />
          <path d="M160 607L1430 -1" stroke="#47b04b" />
          <path d="M0 682L160 607" stroke="#47a04b" strokeDasharray="1 4" />
          <path d="M160 607L1152 895" stroke="#d0213a" />
          <path d="M0 560L160 607" stroke="#d0213a" strokeDasharray="1 3" />
        </g>
        <path d="M464 551L886 315" stroke="#17171a" strokeWidth="2.6" />
        <ellipse cx="429" cy="571" rx="56.5" ry="39.6" transform="rotate(59.5 429 571)" fill="#b8c5cf" stroke="#17171a" strokeWidth="2.6" />
        <rect x="429" y="572" width="1" height="1" fill="#17171a" />
      </svg>
    </main>
  )
}

function Tray() {
  return (
    <aside className="ml-[5px] flex w-[297px] shrink-0 flex-col bg-[#f7faff]">
      <div className="mb-[2px] flex h-[27px] items-center bg-linear-to-b from-[#c8d4e3] to-[#dce6f5] pr-1 pl-1">
        <h2 className="flex-1 text-base leading-5">기본 트레이</h2>
        <button aria-label="고정" className="mr-[9px]">
          <svg className="h-[10px] w-2" viewBox="0 0 8 10" fill="none" stroke="#111" aria-hidden="true">
            <path d="M2 1H6V6H2ZM5 1V6M0 6H8M4 6V10" />
          </svg>
        </button>
        <button aria-label="닫기" className="flex h-3 w-3 items-center justify-center bg-[#c75f65]">
          <svg className="h-[6px] w-[6px]" viewBox="0 0 6 6" stroke="#fff" strokeWidth="2" aria-hidden="true">
            <path d="M0 0L6 6M6 0L0 6" />
          </svg>
        </button>
      </div>
      {trays.map((name) => (
        <section key={name} className="mb-px flex h-[23px] items-center border-t border-l border-[#b0b0b0] bg-linear-to-b from-[#f2f2f2] to-[#bcbcbc] pr-[3px] pb-px">
          <button className="flex flex-1 items-center pl-[9px] text-base leading-5">
            <svg className="mr-[9px] h-[9px] w-[9px]" viewBox="0 0 9 9" aria-hidden="true">
              <path d="M0 0L9 4.5L0 9Z" fill="#111" />
            </svg>
            <span className="pb-[2px]">{name}</span>
          </button>
          <button aria-label={`${name} 닫기`} className="flex h-[17px] w-[17px] items-center justify-center border border-[#a8a8a8] bg-[#ececec] outline-1 outline-white">
            <svg className="h-[7px] w-[7px]" viewBox="0 0 7 7" stroke="#222" strokeWidth="1.6" aria-hidden="true">
              <path d="M0.500 0.500L6.500 6.500M6.500 0.500L0.500 6.500" />
            </svg>
          </button>
        </section>
      ))}
    </aside>
  )
}

function TitleBar() {
  return (
    <header className="flex h-[31px] items-center bg-white pr-1 pl-[3px]">
      <svg className="mb-px h-5 w-[18px]" viewBox="0 0 18 20" aria-hidden="true">
        <path d="M1 4L13 1L17 5V15L5 19L2 16Z" fill="#e03a42" />
        <path d="M13 1L17 5V15L14 16V5Z" fill="#b3232c" />
        <path d="M12 4L3 6V9L10 8V10L4 11.500M10 10V13L4 15" fill="none" stroke="#fff" strokeWidth="1.4" />
      </svg>
      <h1 className="mb-[2px] ml-[6px] flex-1 text-base">제목 없음 - SketchUp Make 2017</h1>
      <button aria-label="최소화" className="flex h-full w-[58px] items-center justify-center">
        <svg className="mb-1 h-3 w-3" viewBox="0 0 12 12" stroke="#111" aria-hidden="true">
          <path d="M0 5.500H12" />
        </svg>
      </button>
      <button aria-label="이전 크기로" className="flex h-full w-[58px] items-center justify-center">
        <svg className="mb-1 h-3 w-3" viewBox="0 0 12 12" fill="none" stroke="#111" aria-hidden="true">
          <path d="M0.500 2.500H9.500V11.500H0.500ZM2.500 2.500V0.500H11.500V9.500H9.500" />
        </svg>
      </button>
      <button aria-label="창 닫기" className="flex h-full w-[58px] items-center justify-center">
        <svg className="mb-1 h-3 w-3" viewBox="0 0 12 12" stroke="#111" strokeWidth="1.2" aria-hidden="true">
          <path d="M0 0L12 12M12 0L0 12" />
        </svg>
      </button>
    </header>
  )
}

function StatusBar() {
  return (
    <footer className="flex h-[31px] items-end bg-[#f2f2f3]">
      <div className="flex h-7 flex-1 items-center">
        <button aria-label="위치" className="ml-[6px]">
          <svg className="h-[19px] w-[19px]" viewBox="0 0 19 19" fill="none" aria-hidden="true">
            <circle cx="9.500" cy="9.500" r="8.500" stroke="#a8a8a8" />
            <path d="M9.500 16L6 8A3.600 3.600 0 1 1 13 8Z" fill="#a0a0a0" />
          </svg>
        </button>
        <button aria-label="제작자" className="ml-4">
          <svg className="h-[19px] w-[19px]" viewBox="0 0 19 19" fill="none" aria-hidden="true">
            <circle cx="9.500" cy="9.500" r="8.300" stroke="#1b1b1b" strokeWidth="1.700" />
            <circle cx="9.500" cy="4.800" r="1.700" fill="#1b1b1b" />
            <path d="M7 7H12V11H11V15H8V11H7Z" fill="#1b1b1b" />
          </svg>
        </button>
        <button aria-label="로그인" className="ml-4">
          <svg className="h-[19px] w-[19px]" viewBox="0 0 19 19" fill="none" aria-hidden="true">
            <circle cx="9.500" cy="9.500" r="8.500" stroke="#a8a8a8" />
            <circle cx="9.500" cy="6.500" r="3.800" fill="#a0a0a0" />
            <path d="M4 15Q4 10.500 9.500 10.500T15 15Q12.500 17.500 9.500 17.500T4 15Z" fill="#a0a0a0" />
          </svg>
        </button>
        <div className="ml-3 h-[14px] w-px bg-[#8c8c8c]" />
        <p className="ml-[11px] text-[17px]">선택한 면에서 경로를 따릅니다.</p>
      </div>
      <div className="flex h-7 items-center pr-[5px]">
        <div className="mr-[11px] h-[14px] w-px bg-[#8c8c8c]" />
        <label htmlFor="radius" className="w-10 text-base">
          반경
        </label>
        <input
          id="radius"
          type="text"
          defaultValue="187mm"
          className="h-7 w-[250px] rounded-none border border-b-0 border-[#b4bccb] bg-white px-[3px] text-base font-normal outline-none"
        />
      </div>
    </footer>
  )
}

export default function App() {
  return (
    <div className="flex h-screen flex-col overflow-hidden bg-[#1b1b1b] py-[26px] font-['Open_Sans','Noto_Sans_CJK_KR',sans-serif] font-[350] text-[#141418]">
      <TitleBar />
      <nav className="flex h-[21px] items-center bg-white pb-[2px]">
        {menus.map((menu) => (
          <button key={menu} className="px-2 text-base leading-5">
            {menu}
          </button>
        ))}
      </nav>
      <div className="flex h-12 shrink-0 bg-[#f2f2f2]">
        <Toolbar groups={mainTools} label="시작하기" />
        <Toolbar groups={solidTools} label="솔리드 도구" />
        <Toolbar groups={componentTools} label="동적 구성 요소" />
      </div>
      <div className="flex min-h-0 flex-1 bg-[#f2f2f2]">
        <div className="w-[88px] shrink-0">
          <Palette />
        </div>
        <Viewport />
        <Tray />
      </div>
      <StatusBar />
    </div>
  )
}
